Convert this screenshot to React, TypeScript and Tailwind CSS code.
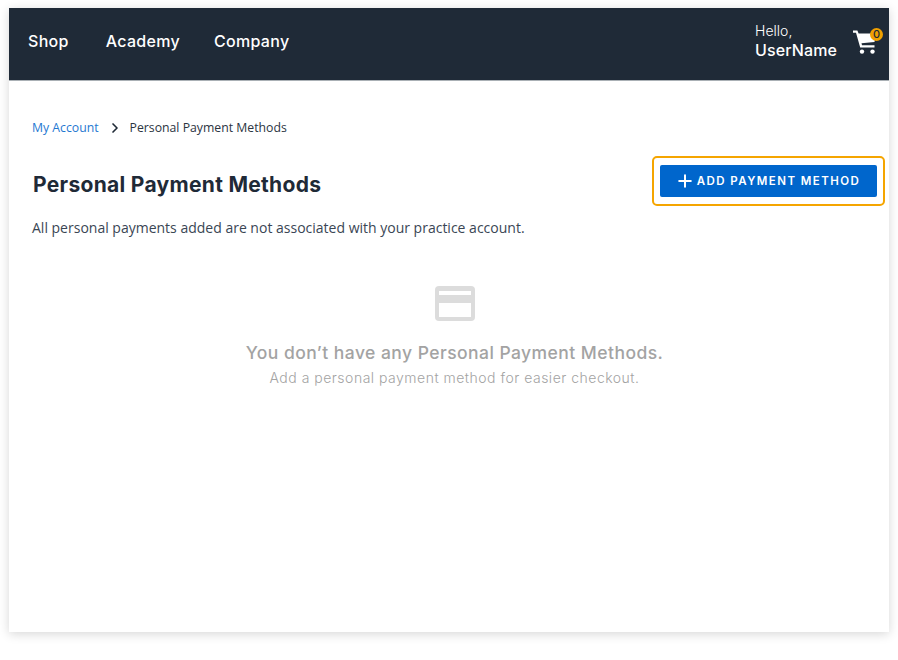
import { ChevronRight, Plus } from "lucide-react";

const gotham = "font-['Inter','Liberation_Sans',sans-serif]";
const openSans = "font-['Open_Sans','Liberation_Sans',sans-serif]";

function CartIcon() {
  return (
    <div className="relative mb-[6px] h-[28px] w-[30px]">
      <svg width="26" height="26" viewBox="0 0 26 26" className="absolute left-0 top-[2px]" fill="#fff">
        <path d="M1 1.5h4.4l1.2 3H24l-1.5 8.6-13 1.2.5 2H22.5v2.2H8.2L4 3.7H1z" />
        <circle cx="10" cy="22.6" r="2.2" />
        <circle cx="20.5" cy="22.6" r="2.2" />
      </svg>
      <span className={`absolute left-[18px] top-[1px] flex h-[13px] w-[13px] items-center justify-center rounded-full bg-[#f0a000] text-[11px] font-medium leading-none text-[#1f2a37] ${gotham}`}>
        0
      </span>
    </div>
  );
}

function Header() {
  return (
    <header className="flex h-[73px] items-center justify-between border-b border-[#aab0b5] bg-[#1f2a37] pl-[19px] pr-[7px] text-white">
      <nav className={`flex pb-[6px] text-[16px] font-medium tracking-[0.3px] ${gotham}`}>
        <a>Shop</a>
        <a className="ml-[37px]">Academy</a>
        <a className="ml-[34px]">Company</a>
      </nav>
      <div className="flex items-center gap-[15px]">
        <div className={`pb-[7px] text-[14px] leading-[19px] ${gotham}`}>
          <div className="font-light">Hello,</div>
          <div className="mt-[1px] text-[16px] font-medium tracking-[0.1px]">UserName</div>
        </div>
        <CartIcon />
      </div>
    </header>
  );
}

function EmptyState() {
  return (
    <div className="mt-[48px] flex flex-col items-center pr-[8px]">
      <svg width="40" height="35" viewBox="0 0 40 35" fill="none">
        <rect x="0" y="0" width="40" height="35" rx="4" fill="#dcdcdc" />
        <rect x="4" y="5" width="32" height="4" fill="#fff" />
        <rect x="4" y="17" width="32" height="14" fill="#fff" />
      </svg>
      <h2 className={`mt-[20px] text-[17.5px] font-medium leading-[24px] tracking-[0.45px] text-[#a3a3a3] ${gotham}`}>
        You don’t have any Personal Payment Methods.
      </h2>
      <p className={`mt-[3px] text-[14px] font-light leading-[20px] tracking-[0.5px] text-[#a3a3a3] ${gotham}`}>
        Add a personal payment method for easier checkout.
      </p>
    </div>
  );
}

export default function App() {
  return (
    <div className="min-h-[660px] bg-white pl-[9px] pt-[8px]">
      <div className="h-[624px] w-[880px] bg-white shadow-[0_2px_10px_rgba(0,0,0,0.16)]">
        <Header />
        <main className="pl-[23px] pr-[4px]">
          <div className={`mt-[37px] flex h-[20px] items-center text-[12.25px] text-[#2b3441] ${openSans}`}>
            <a className="text-[#1f78d1]">My Account</a>
            <ChevronRight size={16} strokeWidth={2.5} className="ml-[8px] mr-[7px] text-[#1f2a37]" />
            <span>Personal Payment Methods</span>
          </div>
          <div className="mt-[18px] flex items-center justify-between">
            <h1 className={`pl-[1px] pt-[8px] text-[21px] font-bold tracking-[0.3px] text-[#1f2a37] ${gotham}`}>Personal Payment Methods</h1>
            <div className="rounded-[5px] border-[2px] border-[#f5a500] bg-white px-[6px] py-[7px]">
              <button
                type="button"
                className={`flex h-[32px] w-[217px] items-center justify-center gap-[2px] rounded-[2px] bg-[#0066cc] text-[11.5px] font-semibold tracking-[0.125em] text-white ${gotham}`}
              >
                <Plus size={20} strokeWidth={2.4} />
                <span className="pr-[2px] pt-[1px]">ADD PAYMENT METHOD</span>
              </button>
            </div>
          </div>
          <p className={`mt-[12px] text-[14px] leading-[20px] text-[#3a4654] ${openSans}`}>
            All personal payments added are not associated with your practice account.
          </p>
          <EmptyState />
        </main>
      </div>
    </div>
  );
}
